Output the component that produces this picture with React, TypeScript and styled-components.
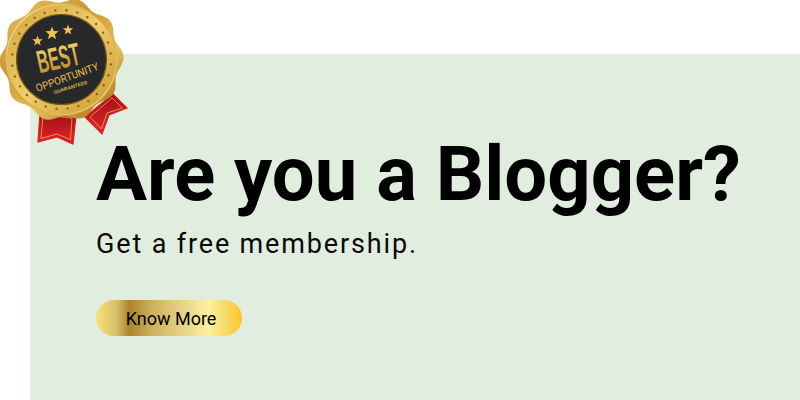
import React from "react";
import styled, { createGlobalStyle } from "styled-components";

const Global = createGlobalStyle`
  html, body { margin: 0; padding: 0; background: #fff; }
  body { width: 800px; height: 400px; overflow: hidden; font-family: Roboto, "Liberation Sans", sans-serif; }
`;

const Page = styled.div`
  position: relative;
  width: 800px;
  height: 400px;
  padding: 54px 0 0 30px;
  box-sizing: border-box;
`;

const Panel = styled.section`
  height: 346px;
  background: #e1edde;
  padding: 75px 0 0 66px;
  box-sizing: border-box;
  display: flex;
  flex-direction: column;
  align-items: flex-start;
`;

const Title = styled.h1`
  margin: 0;
  font-family: Roboto, sans-serif;
  font-weight: 700;
  font-size: 76px;
  line-height: 90px;
  letter-spacing: 0;
  color: #000;
  white-space: nowrap;
`;

const Subtitle = styled.p`
  margin: 9px 0 0;
  font-family: Roboto, sans-serif;
  font-weight: 400;
  font-size: 27px;
  line-height: 32px;
  letter-spacing: 1.85px;
  color: #0a0a0a;
`;

const GoldButton = styled.button`
  margin-top: 40px;
  width: 146px;
  height: 36px;
  border: 0;
  border-radius: 18px;
  padding: 0 0 0 4px;
  font-family: Roboto, sans-serif;
  font-size: 18px;
  color: #000;
  background: linear-gradient(90deg, #f6e27a 0%, #d9c069 14%, #a9852c 23%, #cdb05c 38%, #e6d184 58%, #fdf0a0 77%, #f8dc6a 88%, #fcc528 100%);
`;

const Badge = styled.svg`
  position: absolute;
  left: 0;
  top: 0;
  width: 130px;
  height: 146px;
`;

const cx = 61.5;
const cy = 59.5;

const wavy = (() => {
  const pts: string[] = [];
  for (let i = 0; i <= 240; i++) {
    const a = (i / 240) * Math.PI * 2;
    const r = 59.5 + 2.6 * Math.cos(a * 10 + 0.4);
    pts.push(`${(cx + r * Math.cos(a)).toFixed(2)},${(cy + r * Math.sin(a)).toFixed(2)}`);
  }
  return `M${pts.join("L")}Z`;
})();

const dots = Array.from({ length: 28 }, (_, i) => {
  const a = (i / 28) * Math.PI * 2 + 0.1;
  return { x: cx + 49.5 * Math.cos(a), y: cy + 49.5 * Math.sin(a) };
});

const star = (x: number, y: number, r: number) => {
  const p: string[] = [];
  for (let i = 0; i < 10; i++) {
    const a = -Math.PI / 2 + (i * Math.PI) / 5;
    const q = i % 2 ? r * 0.42 : r;
    p.push(`${(x + q * Math.cos(a)).toFixed(2)},${(y + q * Math.sin(a)).toFixed(2)}`);
  }
  return p.join(" ");
};

const BadgeArt = () => (
  <Badge viewBox="0 0 130 146" role="img" aria-label="Best opportunity guaranteed">
    <defs>
      <linearGradient id="rim" x1="0" y1="0" x2="0.8" y2="1">
        <stop offset="0" stopColor="#eec865" />
        <stop offset="0.4" stopColor="#c9962e" />
        <stop offset="0.7" stopColor="#e8c25c" />
        <stop offset="1" stopColor="#a87618" />
      </linearGradient>
      <linearGradient id="ring" x1="0" y1="0" x2="1" y2="1">
        <stop offset="0" stopColor="#fbeeb0" />
        <stop offset="0.45" stopColor="#cf9f36" />
        <stop offset="1" stopColor="#f3d67a" />
      </linearGradient>
      <linearGradient id="band" x1="0" y1="0" x2="1" y2="1">
        <stop offset="0" stopColor="#d3a53a" />
        <stop offset="0.5" stopColor="#edcd6b" />
        <stop offset="1" stopColor="#c9962c" />
      </linearGradient>
      <linearGradient id="word" x1="0" y1="0" x2="0" y2="1">
        <stop offset="0" stopColor="#f9dc78" />
        <stop offset="1" stopColor="#b5801c" />
      </linearGradient>
      <linearGradient id="ribbon" x1="0" y1="0" x2="0" y2="1">
        <stop offset="0" stopColor="#9d1016" />
        <stop offset="1" stopColor="#e2252b" />
      </linearGradient>
    </defs>
    <polygon points="40,112 76,116 73,144 57,137 38,142" fill="url(#ribbon)" stroke="#e11f26" strokeWidth="1.2" />
    <polygon points="43,115 72,118 70.5,139.5 57,134 41,138.5" fill="none" stroke="#e4b64e" strokeWidth="0.8" />
    <polygon points="85,117 113,94 127,108 109,115 102,134" fill="url(#ribbon)" stroke="#e11f26" strokeWidth="1.2" />
    <polygon points="90,117 112,98 122.5,108 107,113 101.5,129" fill="none" stroke="#e4b64e" strokeWidth="0.8" />
    <path d={wavy} fill="url(#rim)" />
    <circle cx={cx} cy={cy} r="56" fill="url(#ring)" />
    <circle cx={cx} cy={cy} r="54.5" fill="url(#band)" />
    {dots.map((d, i) => (
      <circle key={i} cx={d.x} cy={d.y} r="1.2" fill="#8a6418" />
    ))}
    <circle cx={cx} cy={cy} r="45" fill="#27282a" stroke="#7d5a14" strokeWidth="1.2" />
    <polygon points={star(37.5, 41, 5.5)} fill="#eec455" />
    <polygon points={star(52, 33.5, 7)} fill="#eec455" />
    <polygon points={star(68, 30, 5.5)} fill="#eec455" />
    <text transform="rotate(-12 58 57)" x="58" y="69" textAnchor="middle" fontFamily="'Liberation Sans', sans-serif" fontWeight="700" fontSize="32" textLength="43" lengthAdjust="spacingAndGlyphs" fill="url(#word)">BEST</text>
    <text transform="rotate(-20 67 77)" x="67" y="81" textAnchor="middle" fontFamily="Roboto, sans-serif" fontSize="10.5" textLength="66" lengthAdjust="spacingAndGlyphs" fill="#e6bd55">OPPORTUNITY</text>
    <text transform="rotate(-17 70 86)" x="70" y="89" textAnchor="middle" fontFamily="Roboto, sans-serif" fontWeight="700" fontSize="4.6" textLength="35" lengthAdjust="spacingAndGlyphs" fill="#d8ad46">GUARANTEED</text>
  </Badge>
);

export default function App() {
  return (
    <>
      <Global />
      <Page>
        <Panel>
          <Title>Are you a Blogger?</Title>
          <Subtitle>Get a free membership.</Subtitle>
          <GoldButton>Know More</GoldButton>
        </Panel>
        <BadgeArt />
      </Page>
    </>
  );
}
